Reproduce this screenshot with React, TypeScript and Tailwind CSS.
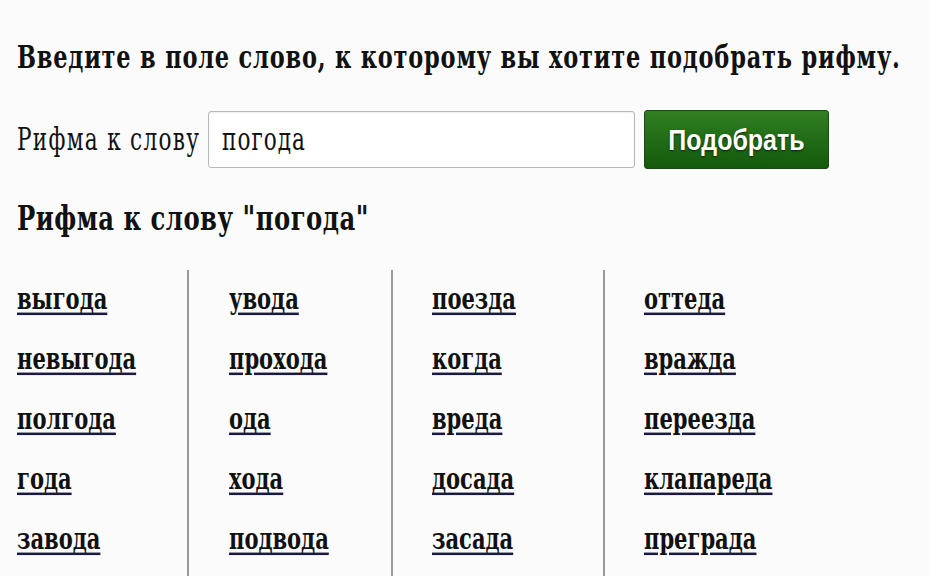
import React from "react";

const columns: string[][] = [
  ["выгода", "невыгода", "полгода", "года", "завода"],
  ["увода", "прохода", "ода", "хода", "подвода"],
  ["поезда", "когда", "вреда", "досада", "засада"],
  ["оттеда", "вражда", "переезда", "клапареда", "преграда"],
];

const colClass = [
  "w-[170px]",
  "w-[204px] border-l-2 border-[#9a9a9a] pl-[40px]",
  "w-[212px] border-l-2 border-[#9a9a9a] pl-[39px]",
  "flex-1 border-l-2 border-[#9a9a9a] pl-[39px]",
];

export default function App() {
  return (
    <div
      className="w-[930px] h-[576px] overflow-hidden bg-[#fbfbfb] pl-[17px] text-[#111] font-stretch-condensed"
      style={{ fontFamily: '"DejaVu Serif", "Liberation Serif", serif' }}
    >
      <div className="h-[36px]" />
      <div className="h-[40px] flex items-center">
        <h1 className="text-[25px] font-bold leading-none tracking-[0.8px] whitespace-nowrap scale-y-[1.3] origin-left">
          Введите в поле слово, к которому вы хотите подобрать рифму.
        </h1>
      </div>
      <div className="h-[34px]" />
      <div className="h-[59px] flex items-center">
        <span className="text-[24px] leading-none tracking-[1.3px] whitespace-nowrap scale-y-[1.3] w-[191px]">
          Рифма к слову
        </span>
        <div className="w-[427px] h-[57px] bg-white border border-[#b8b8b8] rounded-[3px] shadow-[inset_0_1px_2px_rgba(0,0,0,0.08)] flex items-center pl-[13px]">
          <span className="text-[24px] leading-none tracking-[1px] scale-y-[1.3]">погода</span>
        </div>
        <button
          className="ml-[9px] w-[185px] h-[59px] rounded-[3px] border border-[#184d10] bg-gradient-to-b from-[#2f7f22] to-[#145a0b] text-white font-bold text-[25px] flex items-center justify-center [text-shadow:0_1px_2px_rgba(0,0,0,0.7)]"
          style={{ fontFamily: '"Liberation Sans", Arial, sans-serif' }}
        >
          <span className="scale-y-[1.2] inline-block">Подобрать</span>
        </button>
      </div>
      <div className="h-[29px]" />
      <div className="h-[40px] flex items-center">
        <h2 className="text-[27px] font-bold leading-none tracking-[0.5px] whitespace-nowrap scale-y-[1.25] origin-left">
          Рифма к слову "погода"
        </h2>
      </div>
      <div className="h-[32px]" />
      <div className="flex h-[330px]">
        {columns.map((col, i) => (
          <div key={i} className={`${colClass[i]} flex flex-col`}>
            {col.map((w) => (
              <div key={w} className="h-[60px] flex items-center">
                <a
                  href="#"
                  className="text-[23.4px] font-bold leading-none underline decoration-[#1a1a40] decoration-2 underline-offset-[3px] scale-y-[1.25] inline-block"
                >
                  {w}
                </a>
              </div>
            ))}
          </div>
        ))}
      </div>
    </div>
  );
}
